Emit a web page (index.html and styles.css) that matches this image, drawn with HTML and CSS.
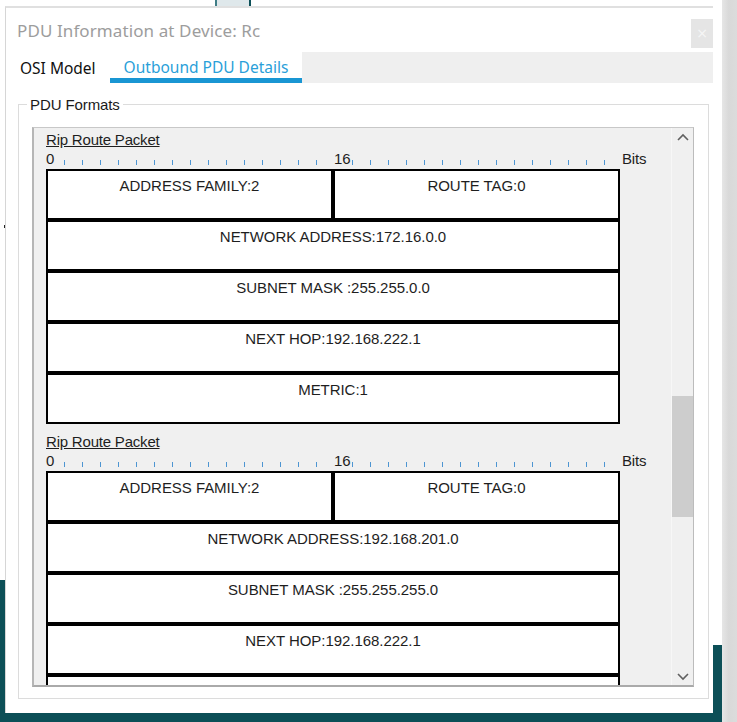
FILE: index.html
```html
<!DOCTYPE html>
<html lang="en">
<head>
<meta charset="utf-8">
<title>PDU Information at Device: Rc</title>
<link rel="stylesheet" href="styles.css">
</head>
<body>
<div class="desk">
  <div class="desk-teal-left"></div>
  <div class="desk-teal-right"></div>
  <div class="desk-teal-bottom"></div>
  <div class="desk-gray"></div>
  <div class="desk-tab"></div>
  <div class="desk-dot dot-black"></div>
  <div class="desk-dot dot-orange"></div>

  <div class="window">
    <div class="header">
      <div class="title">PDU Information at Device: Rc</div>
      <div class="close">&times;</div>
    </div>
    <div class="tabs">
      <div class="tab">OSI Model</div>
      <div class="tab tab-active">Outbound PDU Details</div>
      <div class="tab-filler"></div>
    </div>
    <fieldset class="group">
      <legend class="legend">PDU Formats</legend>
      <div class="panel">
        <div class="content">
          <div class="packet">
            <div class="packet-title">Rip Route Packet</div>
            <div class="ruler">
              <span class="num">0</span>
              <span class="t"></span><span class="t"></span><span class="t"></span><span class="t"></span><span class="t"></span>
              <span class="t"></span><span class="t"></span><span class="t"></span><span class="t"></span><span class="t"></span>
              <span class="t"></span><span class="t"></span><span class="t"></span><span class="t"></span><span class="t"></span>
              <span class="num">16</span>
              <span class="t"></span><span class="t"></span><span class="t"></span><span class="t"></span><span class="t"></span>
              <span class="t"></span><span class="t"></span><span class="t"></span><span class="t"></span><span class="t"></span>
              <span class="t"></span><span class="t"></span><span class="t"></span><span class="t"></span><span class="t"></span>
              <span class="bits">Bits</span>
            </div>
            <div class="fields">
              <div class="cell">ADDRESS FAMILY:2</div>
              <div class="cell">ROUTE TAG:0</div>
              <div class="cell full">NETWORK ADDRESS:172.16.0.0</div>
              <div class="cell full">SUBNET MASK :255.255.0.0</div>
              <div class="cell full">NEXT HOP:192.168.222.1</div>
              <div class="cell full">METRIC:1</div>
            </div>
          </div>
          <div class="packet">
            <div class="packet-title">Rip Route Packet</div>
            <div class="ruler">
              <span class="num">0</span>
              <span class="t"></span><span class="t"></span><span class="t"></span><span class="t"></span><span class="t"></span>
              <span class="t"></span><span class="t"></span><span class="t"></span><span class="t"></span><span class="t"></span>
              <span class="t"></span><span class="t"></span><span class="t"></span><span class="t"></span><span class="t"></span>
              <span class="num">16</span>
              <span class="t"></span><span class="t"></span><span class="t"></span><span class="t"></span><span class="t"></span>
              <span class="t"></span><span class="t"></span><span class="t"></span><span class="t"></span><span class="t"></span>
              <span class="t"></span><span class="t"></span><span class="t"></span><span class="t"></span><span class="t"></span>
              <span class="bits">Bits</span>
            </div>
            <div class="fields">
              <div class="cell">ADDRESS FAMILY:2</div>
              <div class="cell">ROUTE TAG:0</div>
              <div class="cell full">NETWORK ADDRESS:192.168.201.0</div>
              <div class="cell full">SUBNET MASK :255.255.255.0</div>
              <div class="cell full">NEXT HOP:192.168.222.1</div>
              <div class="cell full">METRIC:2</div>
            </div>
          </div>
        </div>
        <div class="scrollbar">
          <div class="sb-btn">
            <svg width="12" height="8" viewBox="0 0 12 8"><path d="M1 7 L6 2 L11 7" fill="none" stroke="#606060" stroke-width="1.6"/></svg>
          </div>
          <div class="sb-track">
            <div class="sb-thumb"></div>
          </div>
          <div class="sb-btn">
            <svg width="12" height="8" viewBox="0 0 12 8"><path d="M1 1 L6 6 L11 1" fill="none" stroke="#606060" stroke-width="1.6"/></svg>
          </div>
        </div>
      </div>
    </fieldset>
  </div>
</div>
</body>
</html>
```

FILE: styles.css
```css
* { box-sizing: border-box; }

html, body {
  margin: 0;
  padding: 0;
  background: #ffffff;
}

.desk {
  position: relative;
  width: 737px;
  height: 722px;
  overflow: hidden;
  background: #ffffff;
  font-family: "Liberation Sans", Arial, sans-serif;
}

.desk-teal-left {
  position: absolute;
  left: 0;
  top: 580px;
  width: 6px;
  height: 142px;
  background: #0c4f57;
}

.desk-teal-right {
  position: absolute;
  left: 712px;
  top: 645px;
  width: 10px;
  height: 77px;
  background: #0c4f57;
}

.desk-teal-bottom {
  position: absolute;
  left: 0;
  top: 712px;
  width: 722px;
  height: 10px;
  background: #0c4f57;
}

.desk-gray {
  position: absolute;
  left: 722px;
  top: 0;
  width: 15px;
  height: 722px;
  background: linear-gradient(to right, #e6e6e6 0%, #d9d9d9 45%, #dcdcdc 100%);
}

.desk-tab {
  position: absolute;
  left: 215px;
  top: 0;
  width: 36px;
  height: 7px;
  background: #dfe8eb;
  border-left: 2px solid #3f7d86;
  border-right: 2px solid #0c4f57;
}

.desk-dot {
  position: absolute;
  width: 2px;
  height: 3px;
}
.dot-black { left: 4px; top: 225px; background: #222; }
.dot-orange { left: 5px; top: 252px; width: 1px; height: 2px; background: #e8a070; }

.window {
  position: absolute;
  left: 5px;
  top: 6px;
  width: 708px;
  height: 707px;
  background: #ffffff;
  border-top: 2px solid #e0e0e0;
  border-left: 1px solid #d6d6d6;
  display: flex;
  flex-direction: column;
}

.header {
  height: 44px;
  display: flex;
  justify-content: space-between;
  align-items: flex-start;
  flex: none;
}

.title {
  padding-left: 11px;
  padding-top: 12px;
  font-family: "Noto Sans", "Open Sans", sans-serif;
  font-size: 17px;
  line-height: 22px;
  letter-spacing: 0.1px;
  color: #9d9d9d;
}

.close {
  margin-top: 11px;
  width: 22px;
  height: 29px;
  background: #e5e5e5;
  color: #f6f6f6;
  font-family: "DejaVu Sans", sans-serif;
  font-size: 14px;
  line-height: 29px;
  text-align: center;
}

.tabs {
  height: 31px;
  display: flex;
  flex: none;
  font-family: "Noto Sans", "Open Sans", sans-serif;
  font-size: 15.5px;
}

.tab {
  padding: 0 14px;
  display: flex;
  align-items: center;
  color: #111111;
  background: #ffffff;
}

.tab-active {
  color: #2a9fd9;
  box-shadow: inset 0 -5px 0 #1996d3;
  padding-bottom: 2px;
}

.tab-filler {
  flex: 1;
  background: #efefef;
}

.group {
  margin: 13px 4px 0 12px;
  padding: 14px 14px 11px 13px;
  border: 1px solid #dcdcdc;
  min-width: 0;
}

.legend {
  margin-left: -5px;
  padding: 0 3px;
  font-size: 15px;
  line-height: 17px;
  letter-spacing: -0.1px;
  color: #1a1a1a;
}

.panel {
  height: 560px;
  display: flex;
  background: #f0f0f0;
  border-top: 1px solid #c8c8c8;
  border-left: 2px solid #b6b6b6;
  border-right: 1px solid #bcbcbc;
  border-bottom: 2px solid #aaaaaa;
}

.content {
  flex: 1;
  overflow: hidden;
  padding: 3px 0 0 12px;
}

.packet {
  margin-bottom: 9px;
}

.packet-title {
  font-size: 15px;
  line-height: 17px;
  letter-spacing: -0.2px;
  color: #1e1e1e;
  text-decoration: underline;
  text-underline-offset: 1px;
}

.ruler {
  height: 21px;
  display: flex;
  align-items: flex-start;
  font-size: 15px;
  line-height: 17px;
  letter-spacing: -0.2px;
  color: #1e1e1e;
}

.ruler .num {
  width: 18px;
  flex: none;
  margin-top: 2px;
}

.ruler .t {
  width: 18px;
  flex: none;
  height: 5px;
  margin-top: 12px;
  border-left: 1px solid #4d95d2;
}

.ruler .bits {
  margin-top: 2px;
}

.fields {
  width: 574px;
  display: grid;
  grid-template-columns: 1fr 1fr;
}

.cell {
  height: 51px;
  border: 2px solid #000000;
  padding-top: 6px;
  text-align: center;
  font-size: 15px;
  line-height: 17px;
  letter-spacing: -0.05px;
  color: #1e1e1e;
  background: #ffffff;
}

.cell.full {
  grid-column: span 2;
}

.scrollbar {
  width: 22px;
  flex: none;
  display: flex;
  flex-direction: column;
  border-left: 1px solid #f7f7f7;
  background: #f0f0f0;
}

.sb-btn {
  height: 17px;
  flex: none;
  display: flex;
  align-items: center;
  justify-content: center;
}

.sb-track {
  flex: 1;
  padding-top: 251px;
}

.sb-thumb {
  height: 121px;
  background: #cdcdcd;
}
```
